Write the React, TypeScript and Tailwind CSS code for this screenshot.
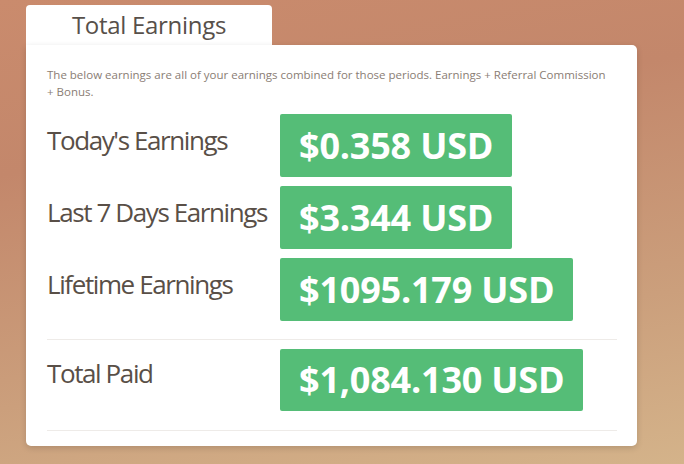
import React from "react";

const rows = [
  { label: "Today's Earnings", value: "$0.358 USD" },
  { label: "Last 7 Days Earnings", value: "$3.344 USD" },
  { label: "Lifetime Earnings", value: "$1095.179 USD" },
];

export default function App() {
  return (
    <div
      className="w-[684px] h-[464px] overflow-hidden bg-[linear-gradient(170deg,#ca8b6d_0%,#c3876b_30%,#cb9f7c_70%,#d4b38a_100%)] pt-[5px] pl-[26px]"
      style={{ fontFamily: '"Open Sans", "Liberation Sans", sans-serif' }}
    >
      <div className="w-[246px] h-[40px] bg-white rounded-t-[4px] flex items-center justify-center">
        <span className="text-[24px] leading-none text-[#57504a] tracking-[-0.3px]">Total Earnings</span>
      </div>
      <div className="w-[611px] h-[401px] bg-white rounded-b-[5px] rounded-tr-[5px] shadow-[0_2px_6px_rgba(0,0,0,0.15)] pt-[21px] pl-[21px] pr-[20px]">
        <p className="pr-[8px] text-[11.5px] leading-[17px] text-[#8a7d74] tracking-[0px]">
          The below earnings are all of your earnings combined for those periods. Earnings + Referral Commission + Bonus.
        </p>
        <div className="mt-[14px] flex flex-col gap-[9px]">
          {rows.map((r) => (
            <div key={r.label} className="flex">
              <div className="w-[233px] pt-[8px] text-[26px] leading-[36px] text-[#594f47] tracking-[-1.4px]">{r.label}</div>
              <div className="h-[63px] px-[19px] bg-[#55bd77] rounded-[2px] flex items-center text-white font-bold text-[36px] leading-none tracking-[-0.2px]">
                {r.value}
              </div>
            </div>
          ))}
        </div>
        <div className="mt-[18px] border-t border-[#eeebe8] pt-[9px] pb-[19px] flex">
          <div className="w-[233px] pt-[6px] text-[26px] leading-[36px] text-[#594f47] tracking-[-1.4px]">Total Paid</div>
          <div className="h-[62px] px-[19px] bg-[#55bd77] rounded-[2px] flex items-center text-white font-bold text-[36px] leading-none tracking-[-0.2px]">
            $1,084.130 USD
          </div>
        </div>
        <div className="border-t border-[#eeebe8]" />
      </div>
    </div>
  );
}
